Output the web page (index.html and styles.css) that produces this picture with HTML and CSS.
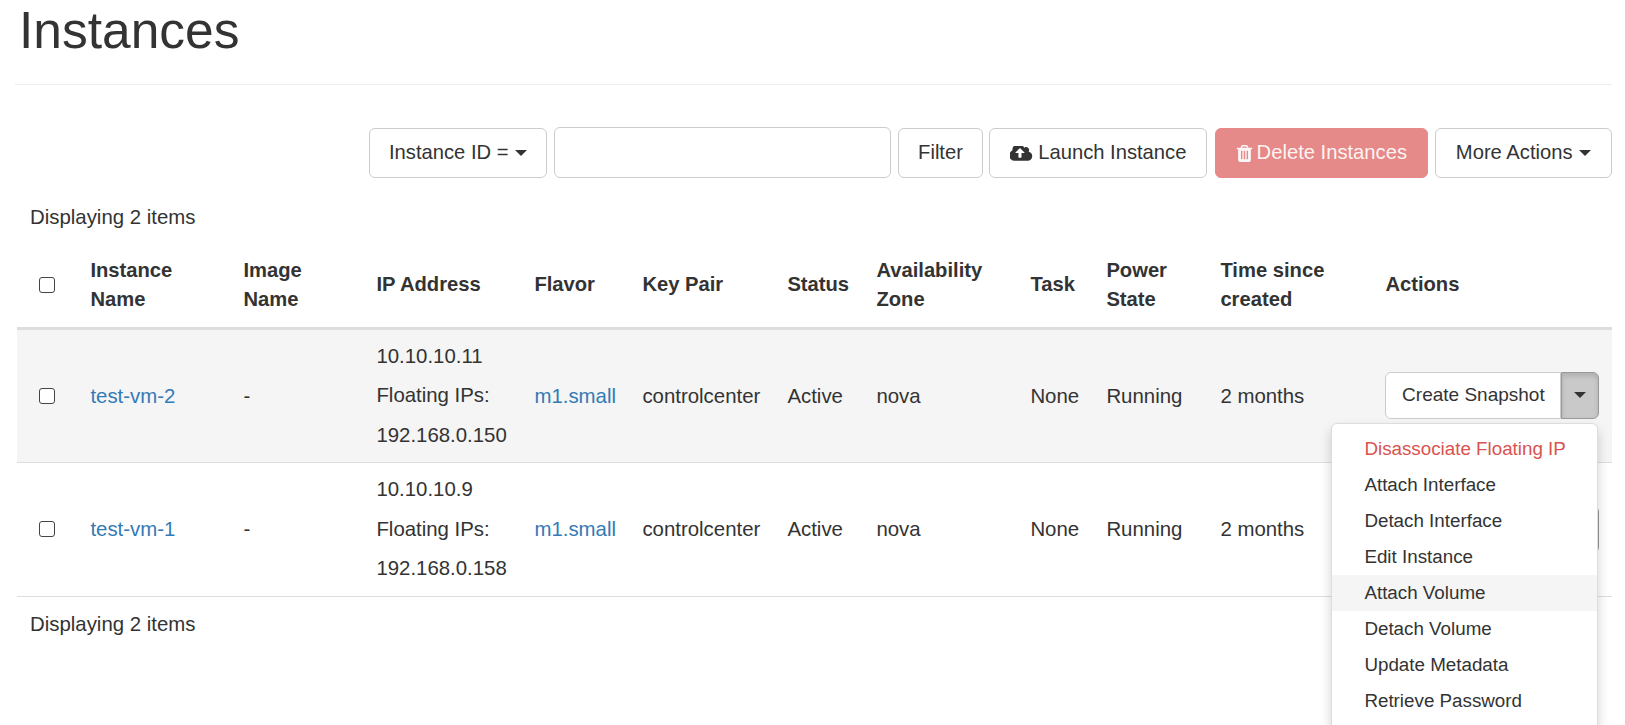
FILE: index.html
```html
<!DOCTYPE html>
<html>

<head>
    <meta charset="utf-8">
    <title>Instances</title>
    <link rel="stylesheet" href="styles.css">
</head>

<body>
    <div class="page">
        <div class="page-header">
            <h1>Instances</h1>
        </div>

        <div class="toolbar">
            <button class="btn btn-filter-field">Instance ID = <span class="caret"></span></button>
            <input class="filter-input" type="text">
            <button class="btn btn-filter">Filter</button>
            <button class="btn btn-launch">
                <svg class="icon" viewBox="0 256 1920 1216">
                    <path d="M1216 800q0-14-9-23l-352-352q-9-9-23-9t-23 9l-351 351q-10 12-10 24 0 14 9 23t23 9h224v352q0 13 9.500 22.500t22.500 9.500h192q13 0 22.500-9.500t9.500-22.500v-352h224q13 0 22.500-9.500t9.500-22.500zm640 288q0 159-112.500 271.500t-271.500 112.500h-1088q-185 0-316.500-131.500t-131.500-316.500q0-130 70-240t188-165q-2-30-2-43 0-212 150-362t362-150q156 0 285.500 87t188.500 231q71-62 166-62 106 0 181 75t75 181q0 76-41 138 130 31 213.500 135.500t83.500 238.500z" />
                </svg>
                Launch Instance
            </button>
            <button class="btn btn-delete">
                <svg class="icon icon-trash" viewBox="128 128 1536 1536">
                    <path d="M704 1376v-704q0-14-9-23t-23-9h-64q-14 0-23 9t-9 23v704q0 14 9 23t23 9h64q14 0 23-9t9-23zm256 0v-704q0-14-9-23t-23-9h-64q-14 0-23 9t-9 23v704q0 14 9 23t23 9h64q14 0 23-9t9-23zm256 0v-704q0-14-9-23t-23-9h-64q-14 0-23 9t-9 23v704q0 14 9 23t23 9h64q14 0 23-9t9-23zm-544-992h448l-48-117q-7-9-17-11h-317q-10 2-17 11zm928 32v64q0 14-9 23t-23 9h-96v948q0 83-47 143.500t-113 60.500h-832q-66 0-113-58.500t-47-141.500v-952h-96q-14 0-23-9t-9-23v-64q0-14 9-23t23-9h309l70-167q15-37 54-63t79-26h320q40 0 79 26t54 63l70 167h309q14 0 23 9t9 23z" />
                </svg>
                Delete Instances
            </button>
            <button class="btn btn-more">More Actions <span class="caret"></span></button>
        </div>

        <div class="count">Displaying 2 items</div>

        <table class="instances">
            <colgroup>
                <col class="col-check">
                <col class="col-name">
                <col class="col-image">
                <col class="col-ip">
                <col class="col-flavor">
                <col class="col-key">
                <col class="col-status">
                <col class="col-zone">
                <col class="col-task">
                <col class="col-power">
                <col class="col-time">
                <col class="col-actions">
            </colgroup>
            <thead>
                <tr>
                    <th><input class="check" type="checkbox"></th>
                    <th>Instance Name</th>
                    <th>Image Name</th>
                    <th>IP Address</th>
                    <th>Flavor</th>
                    <th>Key Pair</th>
                    <th>Status</th>
                    <th>Availability Zone</th>
                    <th>Task</th>
                    <th>Power State</th>
                    <th>Time since created</th>
                    <th>Actions</th>
                </tr>
            </thead>
            <tbody>
                <tr class="row-hover">
                    <td><input class="check" type="checkbox"></td>
                    <td><a href="#">test-vm-2</a></td>
                    <td>-</td>
                    <td>
                        <div class="ip-line">10.10.10.11</div>
                        <div class="ip-line">Floating IPs:</div>
                        <div class="ip-line">192.168.0.150</div>
                    </td>
                    <td><a href="#">m1.small</a></td>
                    <td>controlcenter</td>
                    <td>Active</td>
                    <td>nova</td>
                    <td>None</td>
                    <td>Running</td>
                    <td>2 months</td>
                    <td>
                        <div class="action-group">
                            <button class="btn-action">Create Snapshot</button><button class="btn-toggle open"><span class="caret"></span></button>
                            <ul class="menu">
                                <li class="danger">Disassociate Floating IP</li>
                                <li>Attach Interface</li>
                                <li>Detach Interface</li>
                                <li>Edit Instance</li>
                                <li class="active">Attach Volume</li>
                                <li>Detach Volume</li>
                                <li>Update Metadata</li>
                                <li>Retrieve Password</li>
                            </ul>
                        </div>
                    </td>
                </tr>
                <tr>
                    <td><input class="check" type="checkbox"></td>
                    <td><a href="#">test-vm-1</a></td>
                    <td>-</td>
                    <td>
                        <div class="ip-line">10.10.10.9</div>
                        <div class="ip-line">Floating IPs:</div>
                        <div class="ip-line">192.168.0.158</div>
                    </td>
                    <td><a href="#">m1.small</a></td>
                    <td>controlcenter</td>
                    <td>Active</td>
                    <td>nova</td>
                    <td>None</td>
                    <td>Running</td>
                    <td>2 months</td>
                    <td>
                        <!-- covered by the open menu, only its right edge shows -->
                        <div class="action-group">
                            <button class="btn-action"></button><button class="btn-toggle"></button>
                        </div>
                    </td>
                </tr>
            </tbody>
        </table>

        <div class="count count-bottom">Displaying 2 items</div>
    </div>
</body>

</html>
```

FILE: styles.css
```css
* {
    box-sizing: border-box;
}

html,
body {
    height: 100%;
    overflow: hidden;
}

body {
    margin: 0;
    background-color: #fff;
    color: #333;
    font-family: "Liberation Sans", Arial, sans-serif;
    font-size: 20.4px;
    line-height: 28.6px;
}

.page {
    padding: 0 13px 0 17px;
}

.page-header {
    height: 85px;
    border-bottom: 1px solid #eee;
    margin-left: -2px;
}

h1 {
    margin: 0;
    padding: 0 0 0 4px;
    font-size: 51.5px;
    font-weight: 400;
    line-height: 60px;
}

.toolbar {
    display: flex;
    justify-content: flex-end;
    margin-top: 43px;
    gap: 7px;
}

.btn {
    height: 50px;
    padding: 0 19px 2px;
    background-color: #fff;
    border: 1.5px solid #ccc;
    border-radius: 6px;
    color: #333;
    font: inherit;
    font-size: 20.2px;
    white-space: nowrap;
}

.btn-filter-field {
    width: 178px;
    margin-left: 1px;
}

.filter-input {
    width: 337px;
    height: 51px;
    margin-top: -1px;
    border: 1.5px solid #ccc;
    border-radius: 6px;
}

.btn-filter {
    width: 85px;
}

.btn-launch {
    width: 218px;
    margin-left: -1px;
}

.btn-delete {
    width: 213px;
    margin-left: 1px;
    padding: 0 0 2px;
    background-color: #e58a89;
    border-color: #e58a89;
    color: rgba(255, 255, 255, .92);
}

.btn-more {
    width: 177px;
}

.icon {
    width: 23px;
    height: 15px;
    fill: currentColor;
    vertical-align: -2px;
}

.icon-trash {
    width: 17px;
    height: 17px;
    margin-right: -2px;
    vertical-align: -3px;
}

.caret {
    display: inline-block;
    width: 0;
    height: 0;
    margin-left: 1px;
    border-top: 6px solid currentColor;
    border-left: 6px solid transparent;
    border-right: 6px solid transparent;
    vertical-align: 3px;
}

.count {
    margin-top: 25px;
    padding-left: 13px;
}

.count-bottom {
    margin-top: 13px;
}

.instances {
    width: 100%;
    margin-top: 12px;
    border-collapse: collapse;
    table-layout: fixed;
}

.col-check { width: 62px; }
.col-name { width: 153px; }
.col-image { width: 133px; }
.col-ip { width: 158px; }
.col-flavor { width: 108px; }
.col-key { width: 145px; }
.col-status { width: 89px; }
.col-zone { width: 154px; }
.col-task { width: 76px; }
.col-power { width: 114px; }
.col-time { width: 165px; }

th {
    padding: 12px 11.4px;
    border-bottom: 3px solid #ddd;
    font-size: 20.2px;
    font-weight: 700;
    line-height: 29.5px;
    text-align: left;
    vertical-align: middle;
}

td {
    padding: 7px 11.4px;
    border-bottom: 1.5px solid #ddd;
    white-space: nowrap;
    vertical-align: middle;
}

.row-hover td {
    background-color: #f5f5f5;
}

th:first-child,
td:first-child {
    padding-left: 22px;
}

.check {
    appearance: none;
    display: block;
    width: 16px;
    height: 16px;
    margin: 0;
    background-color: #fff;
    border: 1.5px solid #444;
    border-radius: 3px;
}

a {
    color: #337ab7;
    text-decoration: none;
}

.ip-line {
    line-height: 39.5px;
}

.action-group {
    position: relative;
    display: flex;
    height: 47px;
    width: 214px;
}

.btn-action {
    width: 176px;
    padding: 0 0 2px;
    background-color: #fff;
    border: 1.5px solid #ccc;
    border-radius: 6px 0 0 6px;
    color: #333;
    font: inherit;
    font-size: 19px;
}

.btn-toggle {
    width: 38px;
    padding: 0;
    background-color: #fff;
    border: 1.5px solid #999;
    border-left: 0;
    border-radius: 0 6px 6px 0;
    color: #333;
}

.btn-toggle .caret {
    margin: 0;
    vertical-align: 2px;
}

.btn-toggle.open {
    background-color: #c9c9c9;
    border: 1.5px solid #999;
    box-shadow: inset 0 3px 5px rgba(0, 0, 0, .125);
}

.menu {
    position: absolute;
    z-index: 10;
    top: 51px;
    right: 1px;
    width: 267px;
    height: 340px;
    margin: 0;
    padding: 7px 0;
    list-style: none;
    background-color: #fff;
    border: 1px solid #ddd;
    border-radius: 6px;
    box-shadow: 0 6px 12px rgba(0, 0, 0, .175);
    font-size: 18.8px;
}

.menu li {
    height: 36px;
    padding-left: 32px;
    line-height: 36px;
}

.menu .danger {
    color: #d9534f;
}

.menu .active {
    background-color: #f5f5f5;
}
```
